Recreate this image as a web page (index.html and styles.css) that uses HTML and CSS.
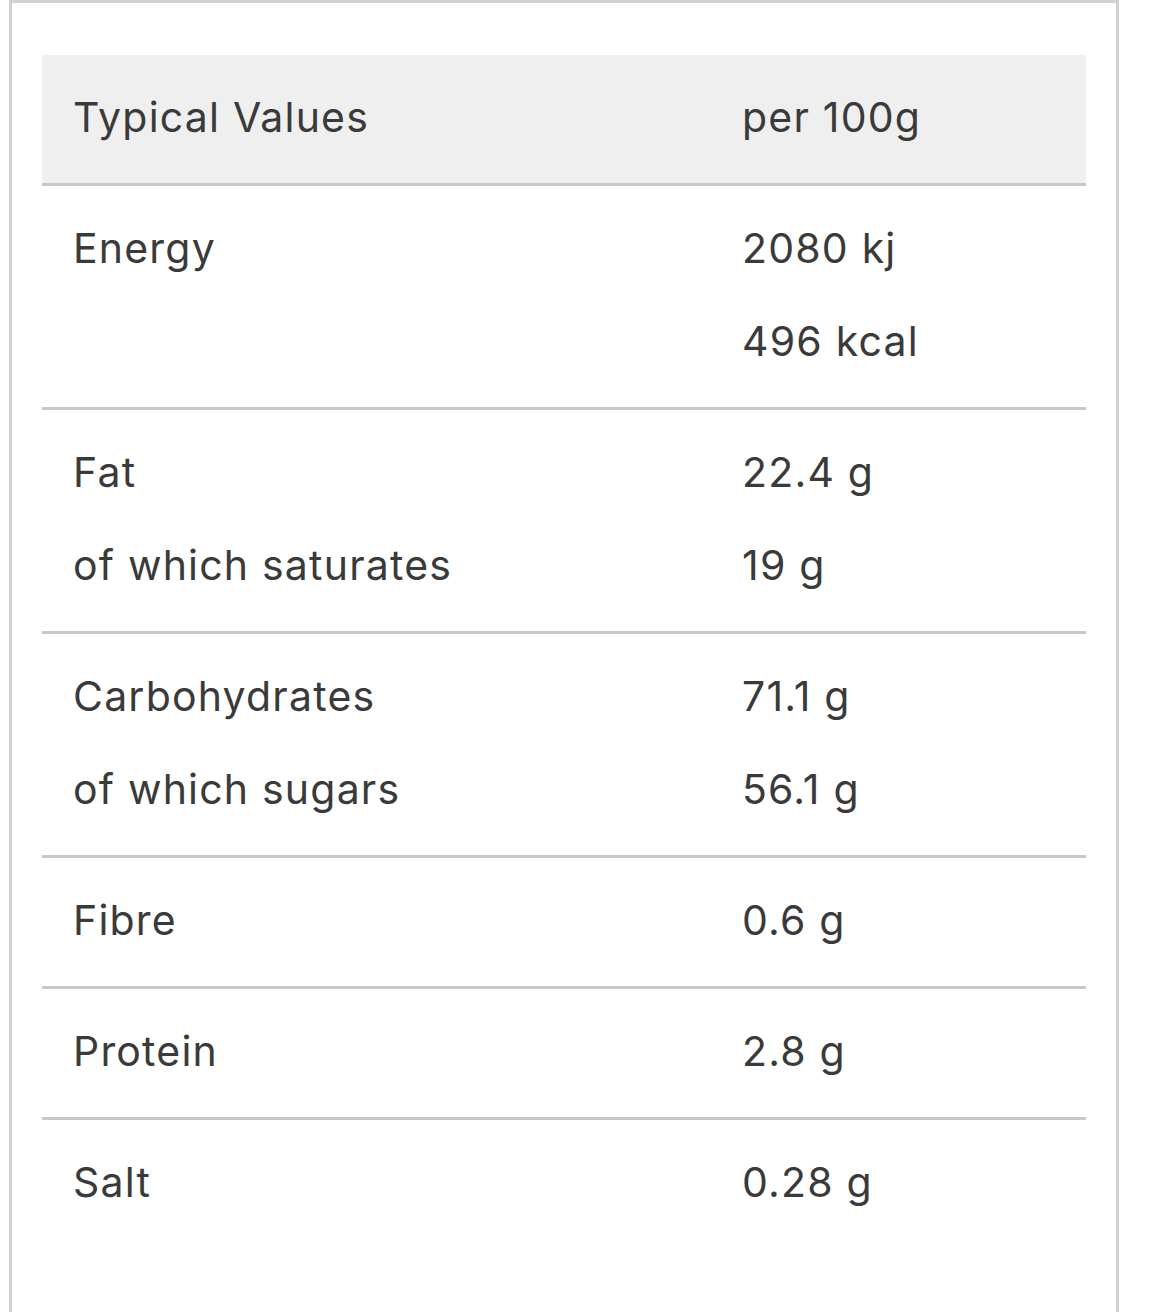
FILE: index.html
```html
<!DOCTYPE html>
<html>
<head>
<meta charset="utf-8">
<link rel="stylesheet" href="styles.css">
</head>
<body>
<div class="card">
  <table class="nutrition">
    <thead>
      <tr><th class="label"><div class="line">Typical Values</div></th><th class="value"><div class="line">per 100g</div></th></tr>
    </thead>
    <tbody>
      <tr><td class="label"><div class="line">Energy</div></td><td class="value"><div class="line">2080 kj</div><div class="line">496 kcal</div></td></tr>
      <tr><td class="label"><div class="line">Fat</div><div class="line">of which saturates</div></td><td class="value"><div class="line">22.4 g</div><div class="line">19 g</div></td></tr>
      <tr><td class="label"><div class="line">Carbohydrates</div><div class="line">of which sugars</div></td><td class="value"><div class="line">71.1 g</div><div class="line">56.1 g</div></td></tr>
      <tr><td class="label"><div class="line">Fibre</div></td><td class="value"><div class="line">0.6 g</div></td></tr>
      <tr><td class="label"><div class="line">Protein</div></td><td class="value"><div class="line">2.8 g</div></td></tr>
      <tr class="last"><td class="label"><div class="line">Salt</div></td><td class="value"><div class="line">0.28 g</div></td></tr>
    </tbody>
  </table>
</div>
</body>
</html>
```
FILE: styles.css
```css
html, body {
  margin: 0;
  padding: 0;
  background: #ffffff;
}
body {
  font-family: Inter, "Open Sans", "Liberation Sans", sans-serif;
  color: #3a3a3a;
  height: 1312px;
  overflow: hidden;
}
.card {
  margin-left: 9px;
  width: 1110px;
  height: 1312px;
  border: 3px solid #d0d0d0;
  border-bottom: none;
  padding: 52px 30px 0 30px;
  box-sizing: border-box;
}
.nutrition {
  width: 100%;
  border-collapse: collapse;
  font-size: 41px;
  letter-spacing: 1.2px;
}
.nutrition th,
.nutrition td {
  font-weight: 400;
  text-align: left;
  vertical-align: top;
  padding: 16px 0 19px 31px;
  border-bottom: 3px solid #c8c8c8;
}
.nutrition thead th {
  background: #efefef;
}
.nutrition th.label,
.nutrition td.label {
  width: 638px;
}
.nutrition tr.last td {
  border-bottom: none;
}
.line {
  line-height: 93px;
  white-space: nowrap;
}
```
